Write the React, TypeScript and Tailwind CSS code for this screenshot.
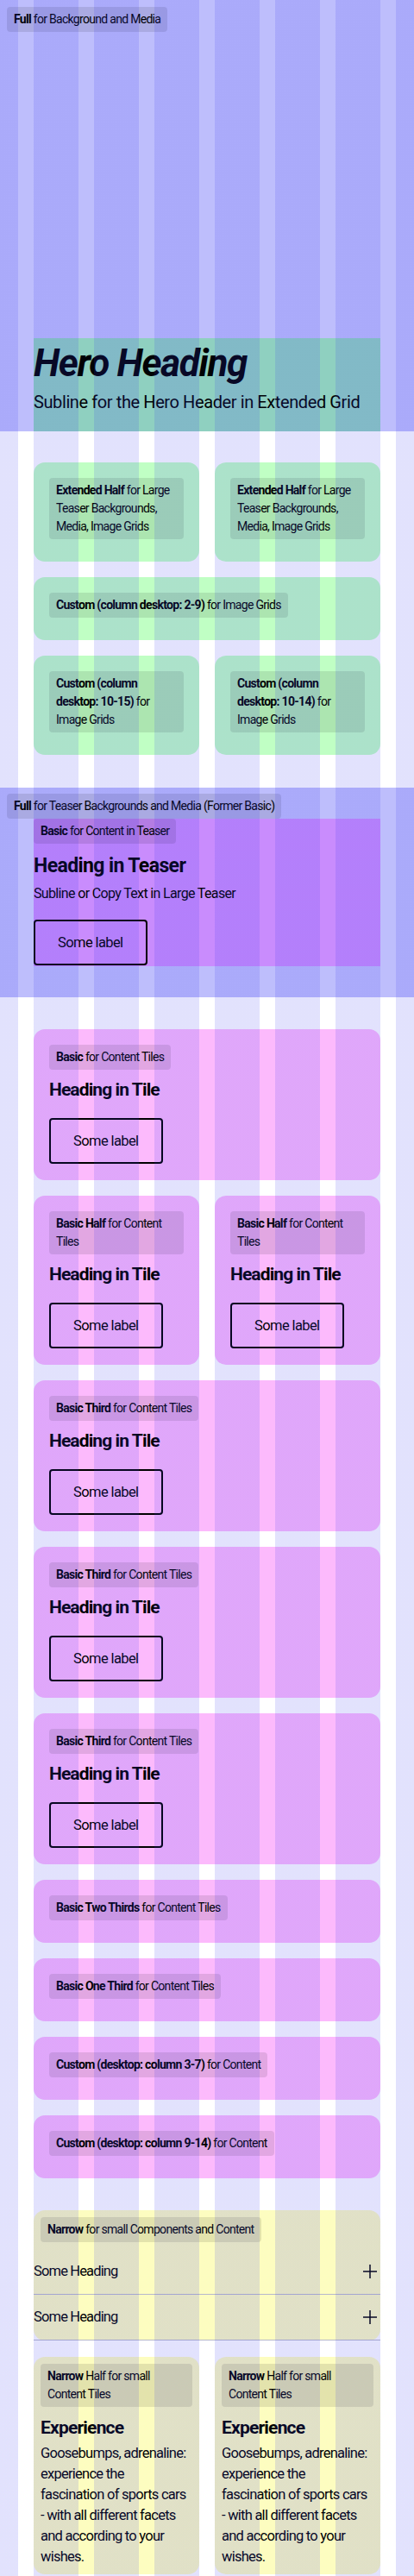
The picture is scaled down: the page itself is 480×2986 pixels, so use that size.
import React from 'react'

// no condensed face installed, so Roboto with tightened tracking stands in
const ff = "font-['Roboto','Liberation_Sans',sans-serif]"

function Tag({ strong, rest, className = '' }: { strong: string; rest: string; className?: string }) {
  return (
    <div className={`w-fit rounded bg-black/10 px-2 py-1 text-[14px] leading-[21px] tracking-[-0.7px] ${className}`}>
      <span className="font-bold">{strong}</span> {rest}
    </div>
  )
}

function Btn() {
  return (
    <button className="flex h-[53px] items-center rounded border-2 border-black px-[26px] text-[16.5px] leading-6 tracking-[-0.6px]">
      Some label
    </button>
  )
}

function Tile({ strong, rest, content = true, className = '' }: { strong: string; rest: string; content?: boolean; className?: string }) {
  return (
    <div className={`rounded-[13px] bg-[#fcbafc] px-[18px] pt-[18px] ${content ? 'pb-[19px]' : 'pb-[18px]'} ${className}`}>
      <Tag strong={strong} rest={rest} className="mb-2" />
      {content && (
        <>
          <h3 className="text-[21px] leading-[30px] font-bold tracking-[-0.9px]">Heading in Tile</h3>
          <div className="mt-[18px]">
            <Btn />
          </div>
        </>
      )}
    </div>
  )
}

function GreenTile({ strong, rest, className = '' }: { strong: string; rest: string; className?: string }) {
  return (
    <div className={`rounded-[13px] bg-[#c0ffc4] px-[18px] pt-[18px] pb-[18px] ${className}`}>
      <Tag strong={strong} rest={rest} className="mb-2" />
    </div>
  )
}

function PlusIcon() {
  return (
    <svg width="24" height="24" viewBox="0 0 24 24" fill="none" stroke="#010205" strokeWidth="1.5">
      <path d="M4 12h16M12 4v16" />
    </svg>
  )
}

function NarrowTile() {
  return (
    <div className="rounded-[13px] bg-[#fdfdc0] p-2">
      <Tag strong="Narrow" rest="Half for small Content Tiles" className="mb-2" />
      <h3 className="mb-[2px] text-[21px] leading-[32px] font-bold tracking-[-0.8px]">Experience</h3>
      <p className="text-[16.5px] leading-6 tracking-[-0.75px]">
        Goosebumps, adrenaline:
        <br />
        experience the
        <br />
        fascination of sports cars
        <br />- with all different facets and according to your wishes.
      </p>
    </div>
  )
}

export default function App() {
  return (
    <div className={`relative min-h-[2986px] bg-white text-[#010205] ${ff}`}>
      {/* Hero */}
      <section className="flex h-[500px] flex-col justify-between bg-[#bebefc]">
        <Tag strong="Full" rest="for Background and Media" className="mt-2 ml-2" />
        <div className="mx-[39px] bg-[#8fd0c0] pb-[18px]">
          <h1 className="text-[44px] leading-[59px] font-bold italic tracking-[-1.3px]">Hero Heading</h1>
          <p className="text-[20px] leading-[31px] tracking-[-0.4px]">Subline for the Hero Header in Extended Grid</p>
        </div>
      </section>

      {/* Extended */}
      <section className="grid grid-cols-2 gap-[18px] px-[39px] pt-[36px] pb-[38px]">
        <GreenTile strong="Extended Half" rest="for Large Teaser Backgrounds, Media, Image Grids" />
        <GreenTile strong="Extended Half" rest="for Large Teaser Backgrounds, Media, Image Grids" />
        <GreenTile strong="Custom (column desktop: 2-9)" rest="for Image Grids" className="col-span-2" />
        <GreenTile strong="Custom (column desktop: 10-15)" rest="for Image Grids" />
        <GreenTile strong="Custom (column desktop: 10-14)" rest="for Image Grids" />
      </section>

      {/* Teaser */}
      <section className="bg-[#bebefc] pt-[7px] pb-[36px]">
        <Tag strong="Full" rest="for Teaser Backgrounds and Media (Former Basic)" className="ml-2" />
        <div className="mx-[39px] bg-[#c98cfd] pb-px">
          <Tag strong="Basic" rest="for Content in Teaser" className="mb-2" />
          <h2 className="text-[23px] leading-[35px] font-bold tracking-[-0.6px]">Heading in Teaser</h2>
          <p className="mt-px text-[16px] leading-[27px] tracking-[-0.65px]">Subline or Copy Text in Large Teaser</p>
          <div className="mt-[17px]">
            <Btn />
          </div>
        </div>
      </section>

      {/* Basic */}
      <section className="grid grid-cols-2 gap-[18px] px-[39px] pt-[37px]">
        <Tile strong="Basic" rest="for Content Tiles" className="col-span-2" />
        <Tile strong="Basic Half" rest="for Content Tiles" />
        <Tile strong="Basic Half" rest="for Content Tiles" />
        <Tile strong="Basic Third" rest="for Content Tiles" className="col-span-2" />
        <Tile strong="Basic Third" rest="for Content Tiles" className="col-span-2" />
        <Tile strong="Basic Third" rest="for Content Tiles" className="col-span-2" />
        <Tile strong="Basic Two Thirds" rest="for Content Tiles" content={false} className="col-span-2" />
        <Tile strong="Basic One Third" rest="for Content Tiles" content={false} className="col-span-2" />
        <Tile strong="Custom (desktop: column 3-7)" rest="for Content" content={false} className="col-span-2" />
        <Tile strong="Custom (desktop: column 9-14)" rest="for Content" content={false} className="col-span-2" />
      </section>

      {/* Narrow */}
      <section className="px-[39px] pt-[37px]">
        <div className="rounded-[13px] bg-[#fdfdc0] pt-2">
          <Tag strong="Narrow" rest="for small Components and Content" className="mb-2 ml-2" />
          {[1, 2].map((i) => (
            <div
              key={i}
              className="flex h-[53px] items-center justify-between border-b border-[#b6b8cc] text-[16.5px] tracking-[-0.85px]"
            >
              <span>Some Heading</span>
              <PlusIcon />
            </div>
          ))}
        </div>
        <div className="mt-[19px] grid grid-cols-2 gap-[18px]">
          <NarrowTile />
          <NarrowTile />
        </div>
      </section>

      {/* grid visualizer overlay */}
      <div className="pointer-events-none absolute inset-0 z-10 bg-[image:repeating-linear-gradient(90deg,rgba(50,50,240,0.14)_0_21px,transparent_21px_39px,rgba(50,50,240,0.14)_39px_70px)]" />
    </div>
  )
}
